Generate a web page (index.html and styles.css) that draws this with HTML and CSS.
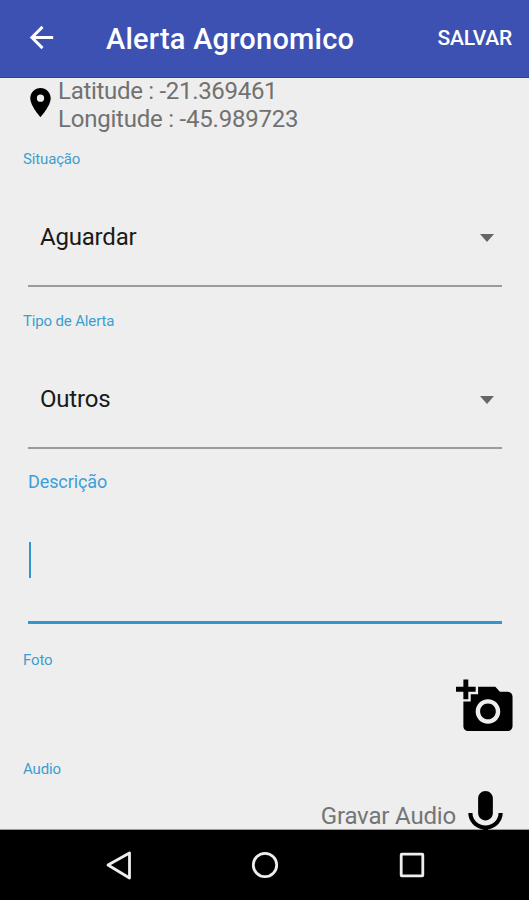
FILE: index.html
```html
<!DOCTYPE html>
<html lang="pt-BR">
<head>
    <meta charset="UTF-8">
    <meta name="viewport" content="width=device-width, initial-scale=1.0">
    <title>Alerta Agronomico</title>
    <link rel="stylesheet" href="styles.css">
</head>
<body>

    <!-- App bar -->
    <header class="app-bar">
        <svg class="back" viewBox="0 0 24 24"><path d="M20 11H7.83l5.59-5.59L12 4l-8 8 8 8 1.41-1.41L7.83 13H20v-2z"/></svg>
        <h1 class="title">Alerta Agronomico</h1>
        <span class="save">SALVAR</span>
    </header>

    <main class="content">
        <div class="location">
            <svg class="pin" viewBox="0 0 24 24"><path d="M12 2C8.13 2 5 5.13 5 9c0 5.25 7 13 7 13s7-7.75 7-13c0-3.87-3.13-7-7-7zm0 9.5a2.5 2.5 0 0 1 0-5 2.5 2.5 0 0 1 0 5z"/></svg>
            <div class="coords">
                <div class="lat">Latitude : -21.369461</div>
                <div class="lng">Longitude : -45.989723</div>
            </div>
        </div>

        <div class="label">Situação</div>
        <div class="spinner">
            <span class="value">Aguardar</span>
            <span class="arrow"></span>
        </div>

        <div class="label">Tipo de Alerta</div>
        <div class="spinner">
            <span class="value">Outros</span>
            <span class="arrow"></span>
        </div>

        <div class="description">
            <div class="description-label">Descrição</div>
            <div class="cursor"></div>
        </div>

        <div class="label">Foto</div>
        <div class="photo-row">
            <svg class="action-icon" viewBox="0 0 24 24"><path d="M3 4V1h2v3h3v2H5v3H3V6H0V4h3zm3 6V7h3V4h7l1.83 2H21c1.1 0 2 .9 2 2v12c0 1.1-.9 2-2 2H5c-1.1 0-2-.9-2-2V10h3zm7 9c2.76 0 5-2.24 5-5s-2.24-5-5-5-5 2.24-5 5 2.24 5 5 5zm-3.2-5c0 1.77 1.43 3.2 3.2 3.2s3.2-1.43 3.2-3.2-1.43-3.2-3.2-3.2-3.2 1.43-3.2 3.2z"/></svg>
        </div>

        <div class="label">Audio</div>
        <div class="audio-row">
            <span class="record">Gravar Audio</span>
            <svg class="action-icon" viewBox="0 0 24 24"><path d="M12 14c1.66 0 2.99-1.34 2.99-3L15 5c0-1.66-1.34-3-3-3S9 3.34 9 5v6c0 1.66 1.34 3 3 3zm5.3-3c0 3-2.54 5.1-5.3 5.1S6.7 14 6.7 11H5c0 3.41 2.72 6.23 6 6.72V21h2v-3.28c3.28-.48 6-3.3 6-6.72h-1.7z"/></svg>
        </div>
    </main>

    <!-- Android navigation bar -->
    <nav class="nav-bar">
        <svg class="nav-icon" viewBox="0 0 32 32"><path d="M6 16L27.5 4v25z"/></svg>
        <svg class="nav-icon" viewBox="0 0 32 32"><circle cx="16" cy="16" r="11.7"/></svg>
        <svg class="nav-icon" viewBox="0 0 32 32"><rect x="5.2" y="5.2" width="21.6" height="21.6" rx="0.5"/></svg>
    </nav>

</body>
</html>
```
FILE: styles.css
```css
* {
    box-sizing: border-box;
}

body {
    margin: 0;
    height: 900px;
    display: flex;
    flex-direction: column;
    background: #eeeeee;
    font-family: Roboto, sans-serif;
    overflow: hidden;
}

svg {
    display: block;
    flex: none;
}

/* --- App bar --- */
.app-bar {
    flex: none;
    display: flex;
    align-items: center;
    height: 78px;
    padding: 0 17px 2px 24px;
    background: #3d51b3;
    border-bottom: 1px solid #2c3fa6;
    color: #fff;
}
.back {
    width: 35px;
    height: 35px;
    fill: #fff;
}
.title {
    flex: 1;
    margin: 3px 0 0 47px;
    font-size: 29px;
    font-weight: 500;
    line-height: 34px;
    letter-spacing: 0.22px;
    white-space: nowrap;
}
.save {
    margin-top: 1px;
    font-size: 21px;
    font-weight: 500;
    letter-spacing: -0.25px;
}

/* --- Form --- */
.content {
    flex: none;
    height: 752px;
    border-bottom: 1px solid #999;
}
.location {
    display: flex;
    height: 70px;
    padding: 0 0 0 23px;
}
.pin {
    width: 35px;
    height: 35px;
    margin-top: 7px;
}
.coords {
    margin-top: -1px;
    color: #717171;
    font-size: 24px;
    line-height: 28px;
    white-space: nowrap;
}
.lat {
    letter-spacing: -0.3px;
}
.lng {
    letter-spacing: -0.22px;
}
.label {
    padding-left: 23px;
    color: #3a9fd0;
    font-size: 15px;
    line-height: 22px;
    letter-spacing: -0.15px;
}
.spinner {
    display: flex;
    align-items: center;
    justify-content: space-between;
    height: 117px;
    margin: 0 27px 23px 28px;
    padding: 18px 8px 0 12px;
    border-bottom: 2px solid #9b9b9b;
}
.value {
    color: #1a1a1a;
    font-size: 24px;
    letter-spacing: -0.2px;
}
.arrow {
    margin-top: 2px;
    border-top: 8px solid #666;
    border-left: 7px solid transparent;
    border-right: 7px solid transparent;
}
.description {
    height: 153px;
    margin: -1px 27px 25px 28px;
    border-bottom: 3px solid #3196cf;
}
.description-label {
    color: #3a9fd8;
    font-size: 18px;
    line-height: 22px;
    letter-spacing: -0.1px;
}
.cursor {
    width: 2px;
    height: 36px;
    margin: 49px 0 0 1px;
    background: #3196cf;
}
.photo-row {
    display: flex;
    justify-content: flex-end;
    height: 87px;
    padding: 6px 14px 0 0;
}
.action-icon {
    width: 59px;
    height: 59px;
}
.audio-row {
    display: flex;
    justify-content: flex-end;
    padding: 6px 14px 0 0;
}
.record {
    margin-top: 16px;
    color: #757575;
    font-size: 24px;
    line-height: 28px;
    letter-spacing: -0.17px;
}

/* --- Navigation bar --- */
.nav-bar {
    flex: none;
    display: flex;
    justify-content: center;
    align-items: center;
    gap: 115px;
    height: 70px;
    background: #000;
}
.nav-icon {
    width: 32px;
    height: 32px;
    fill: none;
    stroke: #eee;
    stroke-width: 2.8;
    stroke-linejoin: round;
}
```
